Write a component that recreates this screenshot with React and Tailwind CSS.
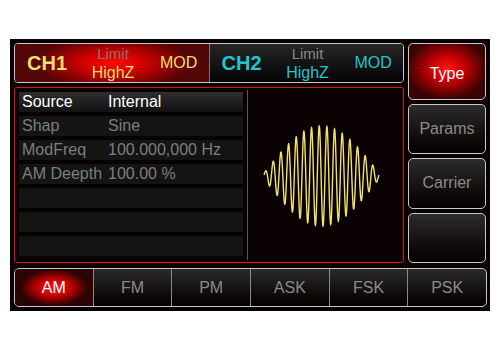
import React from "react";

const rows = [
  { label: "Source", value: "Internal", active: true },
  { label: "Shap", value: "Sine" },
  { label: "ModFreq", value: "100.000,000 Hz" },
  { label: "AM Deepth", value: "100.00 %" },
  {},
  {},
  {},
];

const tabs = ["AM", "FM", "PM", "ASK", "FSK", "PSK"];
const softkeys = ["Type", "Params", "Carrier", ""];

function Wave() {
  const pts = [];
  for (let i = 0; i <= 900; i++) {
    const t = i / 900;
    const a = 3 + 47 * Math.sin(Math.PI * t);
    const x = 16 + 115 * t;
    const y = 88 - a * Math.sin(2 * Math.PI * 15 * t + 0.3);
    pts.push(x.toFixed(2) + "," + y.toFixed(2));
  }
  return (
    <svg width="154" height="174" viewBox="0 0 154 174">
      <polyline points={pts.join(" ")} fill="none" stroke="#f2e26a" strokeWidth="1.4" />
    </svg>
  );
}

function ChannelPanel({ name, color, glow }) {
  return (
    <div
      className={
        "flex h-full w-1/2 items-center pl-3 " +
        (glow
          ? "bg-[radial-gradient(ellipse_78px_26px_at_98px_50%,#ff0808_0%,#d00000_40%,#520606_100%)]"
          : "bg-gradient-to-b from-[#262626] to-[#050505]")
      }
    >
      <div className={"w-[51px] text-[20px] font-bold " + color}>{name}</div>
      <div className="flex w-[70px] flex-col items-center">
        <span className={"text-[15px] leading-[19px] " + (glow ? "text-[#907070]" : "text-[#8a8a8a]")}>Limit</span>
        <span className={"text-[16px] leading-[19px] " + color}>HighZ</span>
      </div>
      <div className={"ml-[12px] text-[16px] " + color}>MOD</div>
    </div>
  );
}

export default function App() {
  return (
    <div className="h-[350px] w-[500px] bg-white pt-[39px] pl-[10px] font-['Liberation_Sans',Arial,sans-serif]">
      <div className="flex h-[272px] w-[480px] flex-col gap-[5px] bg-[#0a0202] p-[4px]">
        <div className="flex h-[220px] gap-[4px]">
          <div className="flex w-[390px] flex-col gap-[4px]">
            <div className="flex h-[40px] overflow-hidden rounded-[4px] border border-[#c8c8c8]">
              <ChannelPanel name="CH1" color="text-[#eedd70]" glow />
              <div className="w-px bg-[#7a7a7a]" />
              <ChannelPanel name="CH2" color="text-[#22c6cc]" />
            </div>
            <div className="flex flex-1 rounded-[3px] border border-[#d81020] bg-[#0a0202]">
              <div className="flex w-[228px] flex-col gap-[4px] pl-[4px] pt-[4px]">
                {rows.map((r, i) => (
                  <div
                    key={i}
                    className={
                      "flex h-[20px] items-center pl-[3px] text-[16px] " +
                      (r.active
                        ? "bg-gradient-to-b from-[#2e2e2e] to-[#121212] text-white"
                        : "bg-[#141414] text-[#7e7e7e]")
                    }
                  >
                    <span className="w-[86px] whitespace-nowrap">{r.label}</span>
                    <span className="whitespace-nowrap">{r.value}</span>
                  </div>
                ))}
              </div>
              <div className="my-[2px] ml-[4px] w-px bg-[#5a5a5a]" />
              <div className="flex-1">
                <Wave />
              </div>
            </div>
          </div>
          <div className="flex w-[78px] flex-col gap-[4px]">
            {softkeys.map((k, i) => (
              <div
                key={i}
                className={
                  "flex flex-1 items-center justify-center rounded-[5px] border border-[#c8c8c8] text-[16px] " +
                  (i === 0
                    ? "bg-[radial-gradient(ellipse_40px_30px_at_50%_45%,#ff1818_0%,#c00000_45%,#3a0404_100%)] pt-[6px] text-white"
                    : "bg-gradient-to-b from-[#2c2c2c] to-[#050202] text-[#8a8a8a]")
                }
              >
                {k}
              </div>
            ))}
          </div>
        </div>
        <div className="flex h-[39px] w-[473px] overflow-hidden rounded-[5px] border border-[#c8c8c8] bg-gradient-to-b from-[#2a2a2a] to-[#050202]">
          {tabs.map((t, i) => (
            <div
              key={t}
              className={
                "flex flex-1 items-center justify-center text-[16px] " +
                (i > 0 ? "border-l border-[#8a8a8a] " : "") +
                (i === 0
                  ? "bg-[radial-gradient(ellipse_34px_18px_at_50%_50%,#ff1010_0%,#c00000_50%,#2a0404_100%)] text-white"
                  : "text-[#8a8a8a]")
              }
            >
              {t}
            </div>
          ))}
        </div>
      </div>
    </div>
  );
}
